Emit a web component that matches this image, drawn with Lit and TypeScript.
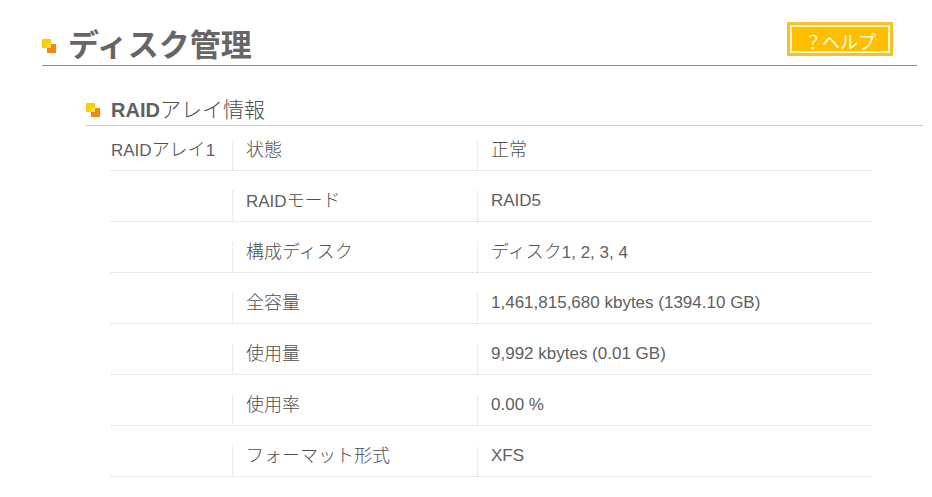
import { LitElement, html, css } from "lit";
import { customElement } from "lit/decorators.js";

const rows: [string, string][] = [
  ["状態", "正常"],
  ["RAIDモード", "RAID5"],
  ["構成ディスク", "ディスク1, 2, 3, 4"],
  ["全容量", "1,461,815,680 kbytes (1394.10 GB)"],
  ["使用量", "9,992 kbytes (0.01 GB)"],
  ["使用率", "0.00 %"],
  ["フォーマット形式", "XFS"],
];

// Japanese runs are set one step larger than the Latin text beside them.
const mixed = (text: string) =>
  text
    .split(/([\u3000-\u9fff]+)/)
    .filter((run) => run)
    .map((run) => (/[\u3000-\u9fff]/.test(run) ? html`<span class="ja">${run}</span>` : run));

const mark = html`<svg class="mark" viewBox="0 0 14 14" aria-hidden="true">
  <rect x="5" y="5" width="9" height="9" fill="#f5860f" />
  <rect x="0" y="0" width="9" height="9" fill="#fad000" />
  <rect x="5" y="5" width="4" height="4" fill="#fcdf4c" />
</svg>`;

@customElement("app-root")
export class AppRoot extends LitElement {
  static styles = css`
    :host {
      display: block;
      background: #fff;
      color: #606060;
      font-family: "Liberation Sans", "Noto Sans CJK JP", sans-serif;
      font-size: 17px;
    }
    .title-bar {
      display: flex;
      align-items: flex-start;
      justify-content: space-between;
      height: 43px;
      margin: 22px 15px 0 42px;
      border-bottom: 1px solid #8c8c8c;
    }
    .title,
    .section-title {
      display: flex;
      align-items: center;
      gap: 12px;
      margin: 0;
    }
    .title {
      height: 48px;
      font-size: 31px;
      line-height: 48px;
      color: #666;
    }
    .section-title {
      gap: 11px;
      height: 30px;
      margin: 29px 9px 0 86px;
      border-bottom: 1px solid #c8c8c8;
      font-size: 20px;
      line-height: 30px;
    }
    .section-title .ja {
      font-size: 21px;
    }
    .ja {
      color: #505050;
      font-weight: 300;
    }
    .mark {
      width: 14px;
      height: 14px;
      flex: none;
    }
    .help {
      width: 106px;
      height: 34px;
      margin-right: 24px;
      padding: 6px 0 0;
      border: 3px solid #f8c030;
      outline: 2px solid #fff6c0;
      outline-offset: -5px;
      background: #ffbe00;
      color: #fffde0;
      font-family: inherit;
      font-size: 18px;
      line-height: 24px;
      cursor: pointer;
    }
    .frame {
      margin: -6px 61px 0 111px;
    }
    table {
      width: 100%;
      table-layout: fixed;
      border-collapse: separate;
      border-spacing: 0 20px;
    }
    .col-array {
      width: 121px;
    }
    .col-item {
      width: 245px;
    }
    th,
    td {
      box-sizing: border-box;
      height: 31px;
      padding: 0 0 0 13px;
      border-bottom: 1px dotted #d8d8d8;
      font-weight: 400;
      line-height: 20px;
      text-align: left;
      vertical-align: top;
      white-space: nowrap;
    }
    .item,
    .value {
      border-left: 1px dotted #d8d8d8;
    }
    .array {
      padding-left: 0;
    }
    td .ja,
    th .ja {
      font-size: 18px;
    }
  `;

  render() {
    return html`
      <header class="title-bar">
        <h1 class="title">${mark}<span>ディスク管理</span></h1>
        <button class="help" type="button">？ヘルプ</button>
      </header>
      <main>
        <h2 class="section-title">${mark}<span>${mixed("RAIDアレイ情報")}</span></h2>
        <div class="frame">
          <table>
            <colgroup>
              <col class="col-array" />
              <col class="col-item" />
              <col />
            </colgroup>
            <tbody>
              ${rows.map(
                ([item, value], i) => html`<tr>
                  <td class="array">${i === 0 ? mixed("RAIDアレイ1") : ""}</td>
                  <th class="item" scope="row">${mixed(item)}</th>
                  <td class="value">${mixed(value)}</td>
                </tr>`
              )}
            </tbody>
          </table>
        </div>
      </main>
    `;
  }
}
